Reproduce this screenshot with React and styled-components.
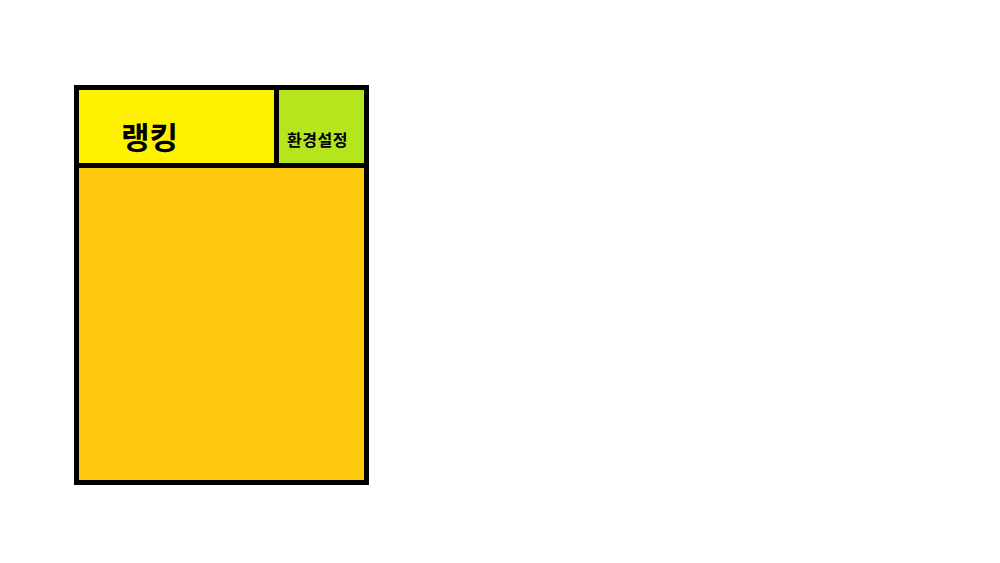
import styled, { createGlobalStyle } from "styled-components";

const GlobalStyle = createGlobalStyle`
  body {
    margin: 0;
    background: #ffffff;
    font-family: "Noto Sans CJK KR", "Noto Sans", sans-serif;
  }
`;

const Page = styled.div`
  width: 1000px;
  height: 563px;
  padding: 85px 0 0 74px;
  box-sizing: border-box;
`;

const Panel = styled.div`
  width: 285px;
  height: 390px;
  border: 5px solid #000;
  display: flex;
  flex-direction: column;
`;

const Header = styled.div`
  display: flex;
  height: 73px;
  border-bottom: 5px solid #000;
`;

const Tab = styled.div`
  display: flex;
  align-items: center;
  background: ${(p) => p.$bg};
  width: ${(p) => p.$w}px;
  padding: ${(p) => p.$pad};
  box-sizing: border-box;
  font-weight: 700;
  font-size: ${(p) => p.$size}px;
  letter-spacing: ${(p) => p.$ls || 0}px;
  color: #000;
`;

const Divider = styled.div`
  width: 5px;
  background: #000;
`;

const Body = styled.div`
  flex: 1;
  background: #ffc90e;
`;

export default function App() {
  return (
    <>
      <GlobalStyle />
      <Page>
        <Panel>
          <Header>
            <Tab $bg="#fff200" $w={195} $size={31} $pad="18px 0 0 42px">
              랭킹
            </Tab>
            <Divider />
            <Tab $bg="#b5e61d" $w={85} $size={16} $ls={0.5} $pad="25px 0 0 8px">
              환경설정
            </Tab>
          </Header>
          <Body />
        </Panel>
      </Page>
    </>
  );
}
